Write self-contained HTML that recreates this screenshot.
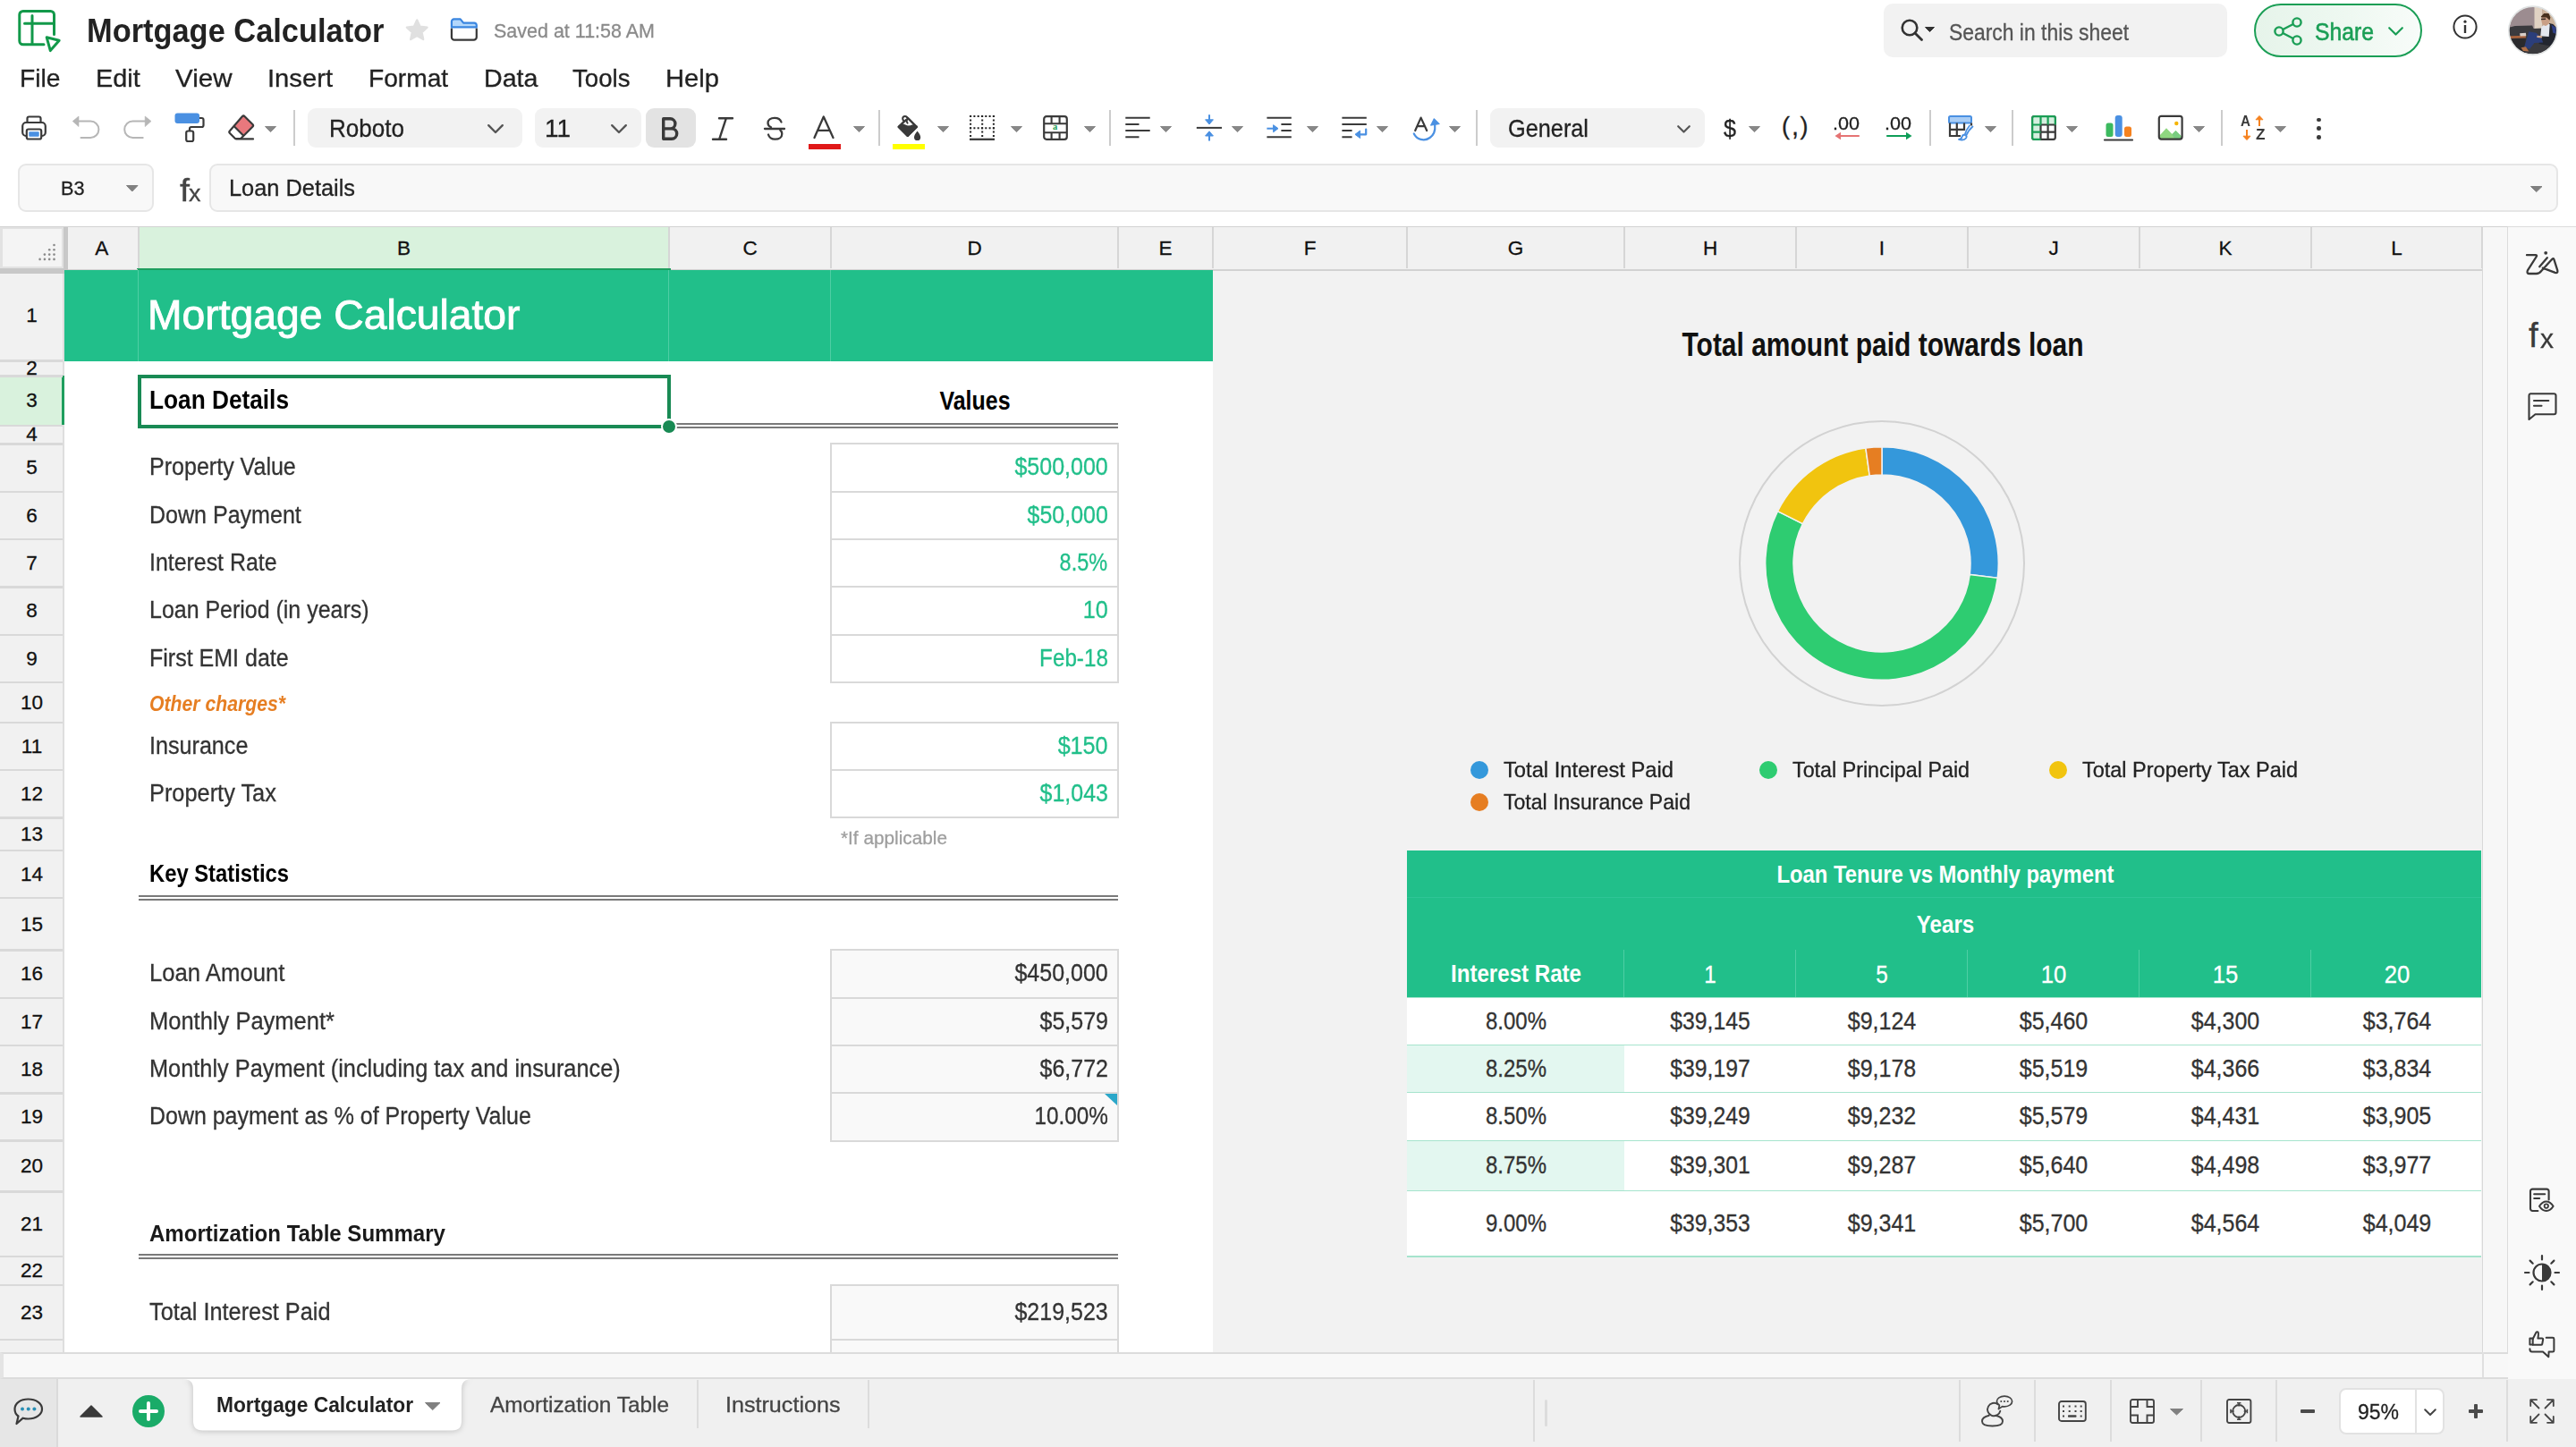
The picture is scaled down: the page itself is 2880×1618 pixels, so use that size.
<!DOCTYPE html>
<html lang="en"><head><meta charset="utf-8"><title>Mortgage Calculator</title><style>
html,body{margin:0;padding:0;background:#fff;}
body{width:2880px;height:1618px;overflow:hidden;position:relative;font-family:"Liberation Sans",sans-serif;}
#app{position:absolute;left:0;top:0;width:2880px;height:1618px;overflow:hidden;background:#fff;}
.t{position:absolute;white-space:nowrap;line-height:1;}
.r{position:absolute;box-sizing:border-box;}
svg{overflow:visible;}
</style></head><body><div id="app"><svg class="r" style="left:20px;top:10px;" width="50" height="50" viewBox="0 0 50 50">
<path d="M29 39.800H5.800a4 4 0 0 1-4-4V6.500a4 4 0 0 1 4-4H36.500a4 4 0 0 1 4 4V28.500" fill="none" stroke="#12994a" stroke-width="3" stroke-linecap="round"></path>
<path d="M7.500 16.300H40M16 7.500V39.500" fill="none" stroke="#12994a" stroke-width="3" stroke-linecap="round"></path>
<path d="M32.200 31.800L46.200 35.200L36.300 46.600Z" fill="#fff" stroke="#12994a" stroke-width="3" stroke-linejoin="round"></path>
</svg><span class="t" style="top: 17.3px; font-size: 36px; color: rgb(34, 34, 34); font-weight: 700; left: 97px; transform-origin: left center; transform: scaleX(0.9553);">Mortgage Calculator</span><svg class="r" style="left:453px;top:20px;" width="27" height="27" viewBox="0 0 27 27"><path d="M13.200 2.300l3.400 7.400 8 0.900-6 5.500 1.700 8-7.100-4.100-7.100 4.100 1.700-8-6-5.500 8-0.900z" fill="#e0e0e0" stroke="#e0e0e0" stroke-width="2.200" stroke-linejoin="round"></path></svg><svg class="r" style="left:503px;top:19px;" width="32" height="28" viewBox="0 0 32 28">
<path d="M1.900 12.500V22.400a3.200 3.200 0 0 0 3.200 3.200H26.600a3.200 3.200 0 0 0 3.200-3.200V12.500" fill="#fff" stroke="#383838" stroke-width="2.200"></path>
<path d="M1.900 11.400V5a2.600 2.600 0 0 1 2.600-2.600h7.200l3.400 4.200h12.100a2.600 2.600 0 0 1 2.600 2.600V11.400z" fill="#b3d7fb" stroke="#3a86e0" stroke-width="2.200" stroke-linejoin="round"></path>
</svg><span class="t" style="top: 23.5px; font-size: 22.5px; color: rgb(138, 138, 138); left: 552px; -webkit-text-stroke-width: 0.3px; transform-origin: left center; transform: scaleX(0.9551);">Saved at 11:58 AM</span><span class="t" style="top: 74.1px; font-size: 28px; color: rgb(34, 34, 34); left: 22px; -webkit-text-stroke-width: 0.3px; transform-origin: left center; transform: scaleX(1.0083);">File</span><span class="t" style="top: 74.1px; font-size: 28px; color: rgb(34, 34, 34); left: 107px; -webkit-text-stroke-width: 0.3px; transform-origin: left center; transform: scaleX(1.0301);">Edit</span><span class="t" style="top: 74.1px; font-size: 28px; color: rgb(34, 34, 34); left: 196px; -webkit-text-stroke-width: 0.3px; transform-origin: left center; transform: scaleX(1.055);">View</span><span class="t" style="top: 74.1px; font-size: 28px; color: rgb(34, 34, 34); left: 299px; -webkit-text-stroke-width: 0.3px; transform-origin: left center; transform: scaleX(1.0424);">Insert</span><span class="t" style="top: 74.1px; font-size: 28px; color: rgb(34, 34, 34); left: 411.8px; -webkit-text-stroke-width: 0.3px; transform-origin: left center; transform: scaleX(1.0058);">Format</span><span class="t" style="top: 74.1px; font-size: 28px; color: rgb(34, 34, 34); left: 540.6px; -webkit-text-stroke-width: 0.3px; transform-origin: left center; transform: scaleX(1.021);">Data</span><span class="t" style="top: 74.1px; font-size: 28px; color: rgb(34, 34, 34); left: 640px; -webkit-text-stroke-width: 0.3px; transform-origin: left center; transform: scaleX(0.9866);">Tools</span><span class="t" style="top: 74.1px; font-size: 28px; color: rgb(34, 34, 34); left: 744px; -webkit-text-stroke-width: 0.3px; transform-origin: left center; transform: scaleX(1.0418);">Help</span><div class="r" style="left:2106px;top:4px;width:384px;height:60px;background:#f2f2f2;border-radius:10px;"></div><svg class="r" style="left:2125px;top:21.4px;" width="26" height="26" viewBox="0 0 26 26"><circle cx="10" cy="10" r="8.3" fill="none" stroke="#333" stroke-width="2.6"></circle><path d="M16 16l7.5 7.5" stroke="#333" stroke-width="2.8" stroke-linecap="round"></path></svg><svg class="r" style="left:2151.5px;top:30.3px;" width="11" height="6" viewBox="0 0 11 6"><path d="M0.5 0.5h10l-5.0 5z" fill="#333" stroke="#333" stroke-width="1" stroke-linejoin="round"></path></svg><span class="t" style="top: 23px; font-size: 26px; color: rgb(85, 85, 85); left: 2179px; -webkit-text-stroke-width: 0.3px; transform-origin: left center; transform: scaleX(0.8802);">Search in this sheet</span><div class="r" style="left:2520px;top:4px;width:188px;height:60px;border:2.5px solid #1a9e55;border-radius:30px;background:linear-gradient(90deg,#e6f4ea 0%,#eef8f1 55%,#f8fcf9 100%);"></div><svg class="r" style="left:2542.2px;top:19px;" width="34" height="32" viewBox="0 0 34 32">
<circle cx="6" cy="16" r="4.6" fill="none" stroke="#1a9e55" stroke-width="2.4"></circle>
<circle cx="26" cy="6" r="4.6" fill="none" stroke="#1a9e55" stroke-width="2.4"></circle>
<circle cx="26" cy="26" r="4.6" fill="none" stroke="#1a9e55" stroke-width="2.4"></circle>
<path d="M10.2 14L21.8 8M10.2 18L21.8 24" stroke="#1a9e55" stroke-width="2.4"></path>
</svg><span class="t" style="top: 21.5px; font-size: 28px; color: rgb(26, 158, 85); left: 2588px; -webkit-text-stroke: 0.6px rgb(26, 158, 85); transform-origin: left center; transform: scaleX(0.8833);">Share</span><svg class="r" style="left:2669.5px;top:30.2px;" width="17" height="10" viewBox="0 0 17 10"><path d="M1.2 1.2L8.5 8.5L15.8 1.2" fill="none" stroke="#1a9e55" stroke-width="2.2" stroke-linecap="round" stroke-linejoin="round"></path></svg><svg class="r" style="left:2742px;top:16px;" width="28" height="28" viewBox="0 0 28 28"><circle cx="14" cy="14" r="12.6" fill="none" stroke="#333" stroke-width="2"></circle><circle cx="14" cy="8.2" r="1.6" fill="#333"></circle><path d="M14 12v9" stroke="#333" stroke-width="2.4"></path></svg><svg class="r" style="left:2804px;top:6px;" width="56" height="56" viewBox="0 0 56 56">
<defs><clipPath id="avc"><circle cx="27.800" cy="28.100" r="26.500"></circle></clipPath></defs>
<g clip-path="url(#avc)">
<rect width="56" height="56" fill="#9c8c90"></rect>
<polygon points="29.5,-1.2 38.2,-1.2 38.2,25.9 29.5,25.9" fill="#e0d2c3"></polygon>
<polygon points="38.2,-1.2 56.1,-1.2 56.1,27.9 38.2,27.9" fill="#cbb39c"></polygon>
<polygon points="0.5,25.0 7.8,23.0 27.1,22.5 28.6,25.9 39.2,25.4 56.1,27.9 56.1,56.9 0.5,56.9" fill="#3a3a3e"></polygon>
<polygon points="0.5,37.5 19.9,36.6 18.9,56.9 0.5,56.9" fill="#2a2a2d"></polygon>
<polygon points="2.4,34.2 19.9,33.7 19.9,36.6 2.4,37.1" fill="#a8623c"></polygon>
<polygon points="13.1,31.3 19.9,30.8 20.3,34.2 13.6,34.6" fill="#d9cfc8"></polygon>
<polygon points="46.0,20.1 50.3,21.1 54.2,25.0 53.7,42.4 46.5,45.3 34.4,42.9 37.3,36.1 45.5,34.6" fill="#22252e"></polygon>
<polygon points="48.4,21.6 53.7,25.0 53.5,31.7 50.3,30.8" fill="#2f3f86"></polygon>
<polygon points="37.3,24.0 41.6,21.1 46.7,21.1 45.7,34.9 36.3,34.2" fill="#e4e7ee"></polygon>
<polygon points="23.3,29.3 31.5,30.8 37.3,36.6 39.2,41.4 29.5,41.9 24.2,48.7 17.9,47.2 20.8,37.5" fill="#2b3e7a"></polygon>
<polygon points="32.4,33.7 38.2,34.2 37.8,36.6 32.4,36.1" fill="#d2a88c"></polygon>
<polygon points="14.5,47.2 19.9,46.2 23.3,51.6 17.0,51.1" fill="#b07048"></polygon>
<ellipse cx="41.9" cy="16.7" rx="4.600" ry="6.200" fill="#c99f86"></ellipse>
<polygon points="36.8,12.4 40.2,9.0 45.5,9.0 47.4,13.4 46.5,16.7 43.1,13.4 37.3,13.4" fill="#47311f"></polygon>
<polygon points="37.0,14.8 42.1,14.6 42.1,16.0 37.0,16.3" fill="#3a2c25"></polygon>
</g>
<circle cx="27.800" cy="28.100" r="27" fill="none" stroke="#dfe2e2" stroke-width="1.600"></circle>
</svg><svg class="r" style="left:24px;top:129px;" width="28" height="28" viewBox="0 0 28 28">
<path d="M6.5 8V3.5a2 2 0 0 1 2-2h11a2 2 0 0 1 2 2V8" fill="none" stroke="#3a3a3a" stroke-width="2.2"></path>
<rect x="1.2" y="8" width="25.6" height="15" rx="4" fill="#fff" stroke="#3a3a3a" stroke-width="2.2"></rect>
<rect x="5.8" y="15.5" width="16.4" height="11" rx="2" fill="#fff" stroke="#3a3a3a" stroke-width="2.2"></rect>
<rect x="8.3" y="18.2" width="11.4" height="5.6" rx="1" fill="#4a90e2"></rect>
</svg><svg class="r" style="left:81px;top:128px;" width="32" height="28" viewBox="0 0 32 28">
<path d="M6 7.600h14.200a9.200 9.200 0 0 1 0 18.400H9.500" fill="none" stroke="#b6b6b6" stroke-width="2" stroke-linecap="round"></path>
<path d="M7 2L0.200 7.600 7 13.600z" fill="#b6b6b6" stroke="#b6b6b6" stroke-width="0.600" stroke-linejoin="round"></path>
</svg><svg class="r" style="left:139px;top:128px;" width="32" height="28" viewBox="0 0 32 28">
<path d="M24 7.600H9.400a9.200 9.200 0 0 0 0 18.400h11.300" fill="none" stroke="#b6b6b6" stroke-width="2" stroke-linecap="round"></path>
<path d="M23.200 2l6.800 5.600-6.800 6z" fill="#b6b6b6" stroke="#b6b6b6" stroke-width="0.600" stroke-linejoin="round"></path>
</svg><svg class="r" style="left:195px;top:126px;" width="34" height="33" viewBox="0 0 34 33">
<rect x="0.5" y="0.5" width="27.5" height="11.5" rx="3" fill="#4a90e2"></rect>
<path d="M28 6h2.5a2 2 0 0 1 2 2v6a2 2 0 0 1-2 2H19a2 2 0 0 0-2 2v3" fill="none" stroke="#3a3a3a" stroke-width="2.2"></path>
<rect x="13.2" y="20.5" width="8" height="11.5" rx="2" fill="#fff" stroke="#3a3a3a" stroke-width="2.2"></rect>
</svg><svg class="r" style="left:255px;top:128px;" width="30" height="30" viewBox="0 0 30 30">
<path d="M17.2 1.6L28 12.4 17.5 23l-10.8-10.8z" fill="#e8787d"></path>
<path d="M15.8 2.2a2 2 0 0 1 2.8 0l8.8 8.8a2 2 0 0 1 0 2.8L14.2 27H8L2 21a2 2 0 0 1 0-2.8z" fill="none" stroke="#3a3a3a" stroke-width="2.2" stroke-linejoin="round"></path>
<path d="M6.5 13L17.8 24.3" stroke="#3a3a3a" stroke-width="2.2"></path>
<path d="M9 27.4h19" stroke="#3a3a3a" stroke-width="2.2" stroke-linecap="round"></path>
</svg><svg class="r" style="left:295.5px;top:141px;" width="13" height="7" viewBox="0 0 13 7"><path d="M0.5 0.5h12l-6.0 6z" fill="#888" stroke="#888" stroke-width="1" stroke-linejoin="round"></path></svg><div class="r" style="left:328px;top:123px;width:2px;height:40px;background:#ccc;"></div><div class="r" style="left:344px;top:121px;width:240px;height:44px;background:#f2f2f2;border-radius:9px;"></div><span class="t" style="top: 128.9px; font-size: 28.5px; color: rgb(34, 34, 34); left: 368px; -webkit-text-stroke-width: 0.3px; transform-origin: left center; transform: scaleX(0.914);">Roboto</span><svg class="r" style="left:545px;top:139px;" width="18" height="10.5" viewBox="0 0 18 10.5"><path d="M1.2 1.2L9.0 9.0L16.8 1.2" fill="none" stroke="#555" stroke-width="2.4" stroke-linecap="round" stroke-linejoin="round"></path></svg><div class="r" style="left:598px;top:121px;width:119px;height:44px;background:#f2f2f2;border-radius:9px;"></div><span class="t" style="top: 128.9px; font-size: 28.5px; color: rgb(34, 34, 34); left: 609px; -webkit-text-stroke-width: 0.3px; transform-origin: left center; transform: scaleX(0.9799);">11</span><svg class="r" style="left:683px;top:139px;" width="18" height="10.5" viewBox="0 0 18 10.5"><path d="M1.2 1.2L9.0 9.0L16.8 1.2" fill="none" stroke="#555" stroke-width="2.4" stroke-linecap="round" stroke-linejoin="round"></path></svg><div class="r" style="left:722px;top:121px;width:56px;height:44px;background:#e3e3e3;border-radius:9px;"></div><svg class="r" style="left:740px;top:131px;" width="20" height="26" viewBox="0 0 20 26"><path d="M1.700 1.700h7.600a5.600 5.600 0 0 1 0 11.200H1.700zM1.700 12.900h9.300a5.700 5.700 0 0 1 0 11.400H1.700z" fill="none" stroke="#3a3a3a" stroke-width="3.400" stroke-linejoin="round"></path></svg><svg class="r" style="left:796px;top:131px;" width="24" height="26" viewBox="0 0 24 26"><path d="M8 1.3h15M1 24.7h15M15.8 1.3L8.2 24.7" fill="none" stroke="#3a3a3a" stroke-width="2.4" stroke-linecap="round"></path></svg><svg class="r" style="left:854px;top:130px;" width="24" height="28" viewBox="0 0 24 28">
<path d="M19.5 6.5c-1-3-3.800-4.700-7.500-4.700-4.500 0-7.500 2.300-7.500 5.700 0 2.300 1.300 3.800 3.500 4.800M5 20.500c1 3.300 3.700 5.200 7.500 5.200 4.700 0 7.800-2.400 7.800-6 0-1.800-0.700-3.200-2-4.200" fill="none" stroke="#3a3a3a" stroke-width="2.3" stroke-linecap="round"></path>
<path d="M1 14h22" stroke="#3a3a3a" stroke-width="2.3" stroke-linecap="round"></path>
</svg><svg class="r" style="left:909px;top:129px;" width="24" height="26" viewBox="0 0 24 26"><path d="M1.5 25L11.8 1.5 22.5 25M5.2 16.800h13.600" fill="none" stroke="#3a3a3a" stroke-width="2.3" stroke-linejoin="round" stroke-linecap="round"></path></svg><div class="r" style="left:904px;top:161px;width:36px;height:6px;background:#e01818;"></div><svg class="r" style="left:953.5px;top:141px;" width="13" height="7" viewBox="0 0 13 7"><path d="M0.5 0.5h12l-6.0 6z" fill="#888" stroke="#888" stroke-width="1" stroke-linejoin="round"></path></svg><div class="r" style="left:982px;top:123px;width:2px;height:40px;background:#ccc;"></div><svg class="r" style="left:1003px;top:128px;" width="28" height="30" viewBox="0 0 28 30">
<path d="M11.800 3.800L21.800 13.800 11.800 23.800 1.800 13.800z" fill="#fff" stroke="#3a3a3a" stroke-width="2.400" stroke-linejoin="round"></path>
<path d="M1.800 13.800c2.300-2.400 4.600-2.400 7-1.200s4.800 1.400 7 0.400 4.200-0.600 6 0.800L11.800 23.800z" fill="#3a3a3a" stroke="#3a3a3a" stroke-width="2.400" stroke-linejoin="round"></path>
<circle cx="8.800" cy="4.600" r="2.600" fill="#fff" stroke="#3a3a3a" stroke-width="2"></circle>
<path d="M9.800 6l1.800 3.600" stroke="#3a3a3a" stroke-width="2" stroke-linecap="round"></path>
<path d="M22.600 18.600c2.200 3 3.600 5 3.600 6.800a3.600 3.600 0 0 1-7.200 0c0-1.800 1.400-3.800 3.600-6.800z" fill="#3a3a3a"></path>
</svg><div class="r" style="left:998px;top:161px;width:36px;height:6px;background:#ffff00;"></div><svg class="r" style="left:1047.5px;top:141px;" width="13" height="7" viewBox="0 0 13 7"><path d="M0.5 0.5h12l-6.0 6z" fill="#888" stroke="#888" stroke-width="1" stroke-linejoin="round"></path></svg><svg class="r" style="left:1084px;top:129px;" width="28" height="28" viewBox="0 0 28 28">
<path d="M0.100 1.100h28M0.100 14.200h28" stroke="#222" stroke-width="2" stroke-dasharray="2 2.300" fill="none"></path>
<path d="M1.100 0.100v25M14.200 0.100v25M26.900 0.100v25" stroke="#222" stroke-width="2" stroke-dasharray="2 2.370" fill="none"></path>
<path d="M0 26.800h28" stroke="#3a3a3a" stroke-width="2.300"></path>
</svg><svg class="r" style="left:1129.5px;top:141px;" width="13" height="7" viewBox="0 0 13 7"><path d="M0.5 0.5h12l-6.0 6z" fill="#888" stroke="#888" stroke-width="1" stroke-linejoin="round"></path></svg><svg class="r" style="left:1166px;top:129px;" width="28" height="28" viewBox="0 0 28 28">
<rect x="1.200" y="1.200" width="25.600" height="25.600" rx="2.800" fill="none" stroke="#3a3a3a" stroke-width="2.200"></rect>
<path d="M1.200 9.200h25.600M1.200 19.200h25.600M9.600 1.200V9M18.600 1.200V9M9.600 19v7.800M18.600 19v7.800" stroke="#3a3a3a" stroke-width="2.100" fill="none"></path>
</svg><span class="t" style="top:136.7px;font-size:10.5px;color:#1a9e55;font-weight:700;left:1177.0px;font-family:'Liberation Serif',serif;">a</span><svg class="r" style="left:1211.5px;top:141px;" width="13" height="7" viewBox="0 0 13 7"><path d="M0.5 0.5h12l-6.0 6z" fill="#888" stroke="#888" stroke-width="1" stroke-linejoin="round"></path></svg><div class="r" style="left:1240px;top:123px;width:2px;height:40px;background:#ccc;"></div><svg class="r" style="left:1258px;top:129px;" width="28" height="28" viewBox="0 0 28 28"><path d="M0.300 2.800h27.400M0.300 10h15.200M0.300 17.100h27.400M0.300 24.200h15.200" stroke="#3a3a3a" stroke-width="2"></path></svg><svg class="r" style="left:1297px;top:141px;" width="13" height="7" viewBox="0 0 13 7"><path d="M0.5 0.5h12l-6.0 6z" fill="#888" stroke="#888" stroke-width="1" stroke-linejoin="round"></path></svg><svg class="r" style="left:1337px;top:127px;" width="30" height="32" viewBox="0 0 30 32">
<path d="M0.800 15.900h28.200" stroke="#3a3a3a" stroke-width="2"></path>
<path d="M15 1.200v7M15 30.600v-7" stroke="#4a90e2" stroke-width="2"></path>
<path d="M10.600 6.800h8.800L15 12z M10.600 25h8.800L15 19.800z" fill="#4a90e2" stroke="#4a90e2" stroke-width="1" stroke-linejoin="round"></path>
</svg><svg class="r" style="left:1377px;top:141px;" width="13" height="7" viewBox="0 0 13 7"><path d="M0.5 0.5h12l-6.0 6z" fill="#888" stroke="#888" stroke-width="1" stroke-linejoin="round"></path></svg><svg class="r" style="left:1416px;top:129px;" width="28" height="28" viewBox="0 0 28 28">
<path d="M0.400 2.800h27.400M16.400 10h11.400M16.400 17.100h11.400M0.400 24.200h27.400" stroke="#3a3a3a" stroke-width="2"></path>
<path d="M0.400 14.700h8" stroke="#4a90e2" stroke-width="2"></path>
<path d="M7.600 10.700l5.400 4-5.400 4z" fill="#4a90e2" stroke="#4a90e2" stroke-width="1" stroke-linejoin="round"></path>
</svg><svg class="r" style="left:1461px;top:141px;" width="13" height="7" viewBox="0 0 13 7"><path d="M0.5 0.5h12l-6.0 6z" fill="#888" stroke="#888" stroke-width="1" stroke-linejoin="round"></path></svg><svg class="r" style="left:1500px;top:129px;" width="29" height="28" viewBox="0 0 29 28">
<path d="M0.400 2.800h27.400M0.400 10h27.400M0.400 17.100h11.200M0.400 24.200h11.200" stroke="#3a3a3a" stroke-width="2"></path>
<path d="M27.200 15.500v5.800h-7.500" fill="none" stroke="#4a90e2" stroke-width="2.200" stroke-linecap="round" stroke-linejoin="round"></path>
<path d="M20.600 17.100l-5.600 4.200 5.600 4.200z" fill="#4a90e2" stroke="#4a90e2" stroke-width="1" stroke-linejoin="round"></path>
</svg><svg class="r" style="left:1539px;top:141px;" width="13" height="7" viewBox="0 0 13 7"><path d="M0.5 0.5h12l-6.0 6z" fill="#888" stroke="#888" stroke-width="1" stroke-linejoin="round"></path></svg><svg class="r" style="left:1578px;top:128px;" width="34" height="32" viewBox="0 0 34 32">
<path d="M4.200 18L10.600 3.600 17.200 18M6.400 13.200h8.600" fill="none" stroke="#3a3a3a" stroke-width="2.200" stroke-linejoin="round" stroke-linecap="round"></path>
<path d="M2.800 21.500c3 6.500 11.500 9 17.800 4.500 4.500-3.200 6.200-8.500 5.600-14" fill="none" stroke="#4a90e2" stroke-width="2.200" stroke-linecap="round"></path>
<path d="M21.500 12.200l3.800-7.600 6 6z" fill="#4a90e2" stroke="#4a90e2" stroke-width="1" stroke-linejoin="round"></path>
</svg><svg class="r" style="left:1619.5px;top:141px;" width="13" height="7" viewBox="0 0 13 7"><path d="M0.5 0.5h12l-6.0 6z" fill="#888" stroke="#888" stroke-width="1" stroke-linejoin="round"></path></svg><div class="r" style="left:1650px;top:123px;width:2px;height:40px;background:#ccc;"></div><div class="r" style="left:1666px;top:121px;width:240px;height:44px;background:#f2f2f2;border-radius:9px;"></div><span class="t" style="top: 128.9px; font-size: 28.5px; color: rgb(34, 34, 34); left: 1686px; -webkit-text-stroke-width: 0.3px; transform-origin: left center; transform: scaleX(0.8875);">General</span><svg class="r" style="left:1875px;top:140px;" width="15" height="9" viewBox="0 0 15 9"><path d="M1.2 1.2L7.5 7.5L13.8 1.2" fill="none" stroke="#555" stroke-width="2.2" stroke-linecap="round" stroke-linejoin="round"></path></svg><span class="t" style="top: 129.7px; font-size: 27.5px; color: rgb(34, 34, 34); left: 1927px; -webkit-text-stroke: 0.3px rgb(34, 34, 34); transform-origin: left center; transform: scaleX(0.9152);">$</span><svg class="r" style="left:1955px;top:141px;" width="13" height="7" viewBox="0 0 13 7"><path d="M0.5 0.5h12l-6.0 6z" fill="#888" stroke="#888" stroke-width="1" stroke-linejoin="round"></path></svg><span class="t" style="top:127.6px;font-size:27px;color:#222;left:1992.0px;-webkit-text-stroke-width:0.3px;">(</span><span class="t" style="top:126.5px;font-size:29px;color:#222;left:2003.0px;-webkit-text-stroke-width:0.3px;">,</span><span class="t" style="top:127.6px;font-size:27px;color:#222;left:2012.5px;-webkit-text-stroke-width:0.3px;">)</span><span class="t" style="top: 126.7px; font-size: 21px; color: rgb(34, 34, 34); left: 2049px; -webkit-text-stroke-width: 0.3px; transform-origin: left center; transform: scaleX(1.0273);">.00</span><svg class="r" style="left:2051px;top:146px;" width="28" height="12" viewBox="0 0 28 12"><path d="M3 6h24" stroke="#e57373" stroke-width="2.200" stroke-linecap="round"></path><path d="M0.500 6l6.500-4.200v8.400z" fill="#e57373"></path></svg><span class="t" style="top: 126.7px; font-size: 21px; color: rgb(34, 34, 34); left: 2107px; -webkit-text-stroke-width: 0.3px; transform-origin: left center; transform: scaleX(1.0273);">.00</span><svg class="r" style="left:2109px;top:146px;" width="29" height="12" viewBox="0 0 29 12"><path d="M1 6h24" stroke="#0f9d58" stroke-width="2.200" stroke-linecap="round"></path><path d="M28.500 6l-6.500-4.200v8.400z" fill="#0f9d58"></path></svg><div class="r" style="left:2157px;top:123px;width:2px;height:40px;background:#ccc;"></div><svg class="r" style="left:2178px;top:129px;" width="30" height="30" viewBox="0 0 30 30">
<rect x="1" y="1" width="25" height="7.500" rx="1.500" fill="#a9cdf5" stroke="#4a90e2" stroke-width="2"></rect>
<path d="M2 8.500v14.500h12M2 15.800h17M9.800 8.500v14.500M18 8.500v8.500M26 8.500v3" fill="none" stroke="#3a3a3a" stroke-width="2.200"></path>
<path d="M27.500 12.500c-3 2.500-6 7-7.500 10.500M24 11.500c-2.500 3-4.500 7-5.500 10.500M19 21.500c-1 0-3 0.500-3.500 2.500-0.400 1.800-2 2.800-3.500 3 3 0.800 6.500 0.600 8-1.500 1-1.300 1.200-2.800-1-4z" fill="none" stroke="#4a90e2" stroke-width="1.800" stroke-linejoin="round" stroke-linecap="round"></path>
</svg><svg class="r" style="left:2218.5px;top:141px;" width="13" height="7" viewBox="0 0 13 7"><path d="M0.5 0.5h12l-6.0 6z" fill="#888" stroke="#888" stroke-width="1" stroke-linejoin="round"></path></svg><div class="r" style="left:2249px;top:123px;width:2px;height:40px;background:#ccc;"></div><svg class="r" style="left:2271px;top:129px;" width="28" height="28" viewBox="0 0 28 28">
<rect x="1.200" y="1.200" width="25.600" height="25.600" rx="2" fill="#fff" stroke="#3a3a3a" stroke-width="2.200"></rect>
<path d="M1.200 1.200h25.600v9.300H10.500v16.300H1.200z" fill="#d5efdf"></path>
<path d="M10.500 10.500h16.300M10.500 18.600h16.300M18.600 10.500v16.300M10.500 10.500v16.300" stroke="#3a3a3a" stroke-width="2.200" fill="none"></path>
<path d="M26.800 10.500V3.200a2 2 0 0 0-2-2H3.200a2 2 0 0 0-2 2v21.600a2 2 0 0 0 2 2h7.300M1.200 10.500h9.300M1.200 18.600h9.300M10.500 1.200v9.300M18.600 1.200v9.300" fill="none" stroke="#1a9e55" stroke-width="2.200"></path>
</svg><svg class="r" style="left:2310px;top:141px;" width="13" height="7" viewBox="0 0 13 7"><path d="M0.5 0.5h12l-6.0 6z" fill="#888" stroke="#888" stroke-width="1" stroke-linejoin="round"></path></svg><svg class="r" style="left:2352px;top:128px;" width="33" height="30" viewBox="0 0 33 30">
<rect x="2.500" y="9.500" width="8" height="15.500" rx="2.500" fill="#3cba5f"></rect>
<rect x="12.700" y="1" width="8" height="24" rx="3" fill="#4a90e2"></rect>
<rect x="23" y="13.500" width="8" height="11.500" rx="2.500" fill="#f5821f"></rect>
<path d="M1 28.500h31" stroke="#3a3a3a" stroke-width="2.200" stroke-linecap="round"></path>
</svg><svg class="r" style="left:2412px;top:128px;" width="30" height="30" viewBox="0 0 30 30">
<path d="M2.500 23.500L10 15.200 16.500 22 20.500 18l6.500 6.500v2.500H2.500z" fill="#8fd680"></path>
<path d="M16.500 22L20.500 18l6.500 6.500v2.500H19z" fill="#79cc80"></path>
<circle cx="21.300" cy="10" r="2.200" fill="#f5b400"></circle>
<rect x="1.800" y="1.800" width="25.800" height="25.800" rx="2.500" fill="none" stroke="#3a3a3a" stroke-width="2.200"></rect>
</svg><svg class="r" style="left:2452px;top:141px;" width="13" height="7" viewBox="0 0 13 7"><path d="M0.5 0.5h12l-6.0 6z" fill="#888" stroke="#888" stroke-width="1" stroke-linejoin="round"></path></svg><div class="r" style="left:2483px;top:123px;width:2px;height:40px;background:#ccc;"></div><span class="t" style="top: 126.8px; font-size: 16.5px; color: rgb(58, 58, 58); left: 2505px; font-weight: 700; transform-origin: left center; transform: scaleX(0.9227);">A</span><span class="t" style="top: 143.1px; font-size: 16px; color: rgb(58, 58, 58); font-weight: 700; left: 2521.5px; transform-origin: left center; transform: scaleX(1.0735);">Z</span><svg class="r" style="left:2520px;top:128px;" width="12" height="14" viewBox="0 0 12 14"><path d="M6 13V4" fill="none" stroke="#f5821f" stroke-width="2"></path><path d="M2 5.800h8L6 1.500z" fill="#f5821f" stroke="#f5821f" stroke-width="1" stroke-linejoin="round"></path></svg><svg class="r" style="left:2506px;top:144px;" width="12" height="14" viewBox="0 0 12 14"><path d="M6 1v9" fill="none" stroke="#f5821f" stroke-width="2"></path><path d="M2 8.200h8L6 12.500z" fill="#f5821f" stroke="#f5821f" stroke-width="1" stroke-linejoin="round"></path></svg><svg class="r" style="left:2542.5px;top:141px;" width="13" height="7" viewBox="0 0 13 7"><path d="M0.5 0.5h12l-6.0 6z" fill="#888" stroke="#888" stroke-width="1" stroke-linejoin="round"></path></svg><div class="r" style="left:2590.4px;top:131.8px;width:4.6px;height:4.6px;background:#3a3a3a;border-radius:50%;"></div><div class="r" style="left:2590.4px;top:141.4px;width:4.6px;height:4.6px;background:#3a3a3a;border-radius:50%;"></div><div class="r" style="left:2590.4px;top:151.0px;width:4.6px;height:4.6px;background:#3a3a3a;border-radius:50%;"></div><div class="r" style="left:20px;top:183px;width:152px;height:53.6px;background:#f8f8f8;border:2px solid #e6e6e6;border-radius:9px;"></div><span class="t" style="top: 201.1px; font-size: 21.5px; color: rgb(34, 34, 34); left: 67.5px; -webkit-text-stroke-width: 0.3px; transform-origin: left center; transform: scaleX(1.0071);">B3</span><svg class="r" style="left:141px;top:207px;" width="13.5" height="7.5" viewBox="0 0 13.5 7.5"><path d="M0.5 0.5h12.5l-6.25 6.5z" fill="#808080" stroke="#808080" stroke-width="1" stroke-linejoin="round"></path></svg><span class="t" style="top: 194.7px; font-size: 35px; color: rgb(68, 68, 68); left: 200.8px; -webkit-text-stroke-width: 0.3px; transform-origin: left center; transform: scaleX(1.13);">f</span><span class="t" style="top: 202.9px; font-size: 26.5px; color: rgb(68, 68, 68); left: 211.3px; -webkit-text-stroke-width: 0.3px; transform-origin: left center; transform: scaleX(1.0189);">x</span><div class="r" style="left:234px;top:183px;width:2626px;height:53.6px;background:#f8f8f8;border:2px solid #e6e6e6;border-radius:9px;"></div><span class="t" style="top: 196.8px; font-size: 26px; color: rgb(34, 34, 34); left: 256px; -webkit-text-stroke-width: 0.3px; transform-origin: left center; transform: scaleX(0.9755);">Loan Details</span><svg class="r" style="left:2829px;top:207.5px;" width="13.5" height="7" viewBox="0 0 13.5 7"><path d="M0.5 0.5h12.5l-6.25 6z" fill="#808080" stroke="#808080" stroke-width="1" stroke-linejoin="round"></path></svg><div class="r" style="left:72px;top:302px;width:1284px;height:1211px;background:#fff;"></div><div class="r" style="left:1356px;top:302px;width:1419px;height:1211px;background:#f2f2f2;"></div><div class="r" style="left:0px;top:252.5px;width:2775px;height:49.5px;background:#f1f1f1;border-top:1.500px solid #d2d2d2;"></div><div class="r" style="left:155px;top:254px;width:593px;height:47px;background:#d9f2dd;"></div><div class="r" style="left:153px;top:300px;width:597px;height:3px;background:#1f9e5e;"></div><div class="r" style="left:154px;top:254px;width:2px;height:46px;background:#d6d6d6;"></div><div class="r" style="left:747px;top:254px;width:2px;height:46px;background:#d6d6d6;"></div><div class="r" style="left:928px;top:254px;width:2px;height:46px;background:#d6d6d6;"></div><div class="r" style="left:1249px;top:254px;width:2px;height:46px;background:#d6d6d6;"></div><div class="r" style="left:1355px;top:254px;width:2px;height:46px;background:#d6d6d6;"></div><div class="r" style="left:1572px;top:254px;width:2px;height:46px;background:#d6d6d6;"></div><div class="r" style="left:1815px;top:254px;width:2px;height:46px;background:#d6d6d6;"></div><div class="r" style="left:2007px;top:254px;width:2px;height:46px;background:#d6d6d6;"></div><div class="r" style="left:2199px;top:254px;width:2px;height:46px;background:#d6d6d6;"></div><div class="r" style="left:2391px;top:254px;width:2px;height:46px;background:#d6d6d6;"></div><div class="r" style="left:2583px;top:254px;width:2px;height:46px;background:#d6d6d6;"></div><div class="r" style="left:2774px;top:254px;width:2px;height:46px;background:#d6d6d6;"></div><div class="r" style="left:76px;top:301px;width:78px;height:1.6px;background:#d2d2d2;"></div><div class="r" style="left:750px;top:301px;width:2025px;height:1.6px;background:#d2d2d2;"></div><div class="r" style="left:0px;top:254px;width:71px;height:46px;background:#f4f4f4;border:2px solid #e2e2e2;border-left:3px solid #e2e2e2;"></div><div class="r" style="left:71px;top:254px;width:5px;height:52px;background:#c8c8c8;"></div><div class="r" style="left:0px;top:300px;width:72px;height:6px;background:#c8c8c8;"></div><svg class="r" style="left:41px;top:271px;" width="22" height="22" viewBox="0 0 22 22"><circle cx="19.5" cy="3.0" r="1.300" fill="#8a8a8a"></circle><circle cx="19.5" cy="8.3" r="1.300" fill="#8a8a8a"></circle><circle cx="14.2" cy="8.3" r="1.300" fill="#8a8a8a"></circle><circle cx="19.5" cy="13.6" r="1.300" fill="#8a8a8a"></circle><circle cx="14.2" cy="13.6" r="1.300" fill="#8a8a8a"></circle><circle cx="8.9" cy="13.6" r="1.300" fill="#8a8a8a"></circle><circle cx="19.5" cy="18.9" r="1.300" fill="#8a8a8a"></circle><circle cx="14.2" cy="18.9" r="1.300" fill="#8a8a8a"></circle><circle cx="8.9" cy="18.9" r="1.300" fill="#8a8a8a"></circle><circle cx="3.6" cy="18.9" r="1.300" fill="#8a8a8a"></circle></svg><span class="t" style="top:266.5px;font-size:22.5px;color:#111;left:113.7px;transform:translateX(-50%);-webkit-text-stroke-width:0.3px;">A</span><span class="t" style="top:266.5px;font-size:22.5px;color:#111;left:451.5px;transform:translateX(-50%);-webkit-text-stroke-width:0.3px;">B</span><span class="t" style="top:266.5px;font-size:22.5px;color:#111;left:838.5px;transform:translateX(-50%);-webkit-text-stroke-width:0.3px;">C</span><span class="t" style="top:266.5px;font-size:22.5px;color:#111;left:1089.5px;transform:translateX(-50%);-webkit-text-stroke-width:0.3px;">D</span><span class="t" style="top:266.5px;font-size:22.5px;color:#111;left:1303.0px;transform:translateX(-50%);-webkit-text-stroke-width:0.3px;">E</span><span class="t" style="top:266.5px;font-size:22.5px;color:#111;left:1464.5px;transform:translateX(-50%);-webkit-text-stroke-width:0.3px;">F</span><span class="t" style="top:266.5px;font-size:22.5px;color:#111;left:1694.5px;transform:translateX(-50%);-webkit-text-stroke-width:0.3px;">G</span><span class="t" style="top:266.5px;font-size:22.5px;color:#111;left:1912.0px;transform:translateX(-50%);-webkit-text-stroke-width:0.3px;">H</span><span class="t" style="top:266.5px;font-size:22.5px;color:#111;left:2104.0px;transform:translateX(-50%);-webkit-text-stroke-width:0.3px;">I</span><span class="t" style="top:266.5px;font-size:22.5px;color:#111;left:2296.0px;transform:translateX(-50%);-webkit-text-stroke-width:0.3px;">J</span><span class="t" style="top:266.5px;font-size:22.5px;color:#111;left:2488.0px;transform:translateX(-50%);-webkit-text-stroke-width:0.3px;">K</span><span class="t" style="top:266.5px;font-size:22.5px;color:#111;left:2679.5px;transform:translateX(-50%);-webkit-text-stroke-width:0.3px;">L</span><div class="r" style="left:0px;top:306px;width:72px;height:1207px;background:#f1f1f1;"></div><div class="r" style="left:70px;top:306px;width:2px;height:1207px;background:#dedede;"></div><div class="r" style="left:0px;top:421px;width:70px;height:54px;background:#d9f2dd;"></div><div class="r" style="left:69px;top:420px;width:3px;height:55px;background:#1f9e5e;"></div><div class="r" style="left:0px;top:402.3px;width:70px;height:2.4px;background:#d9d9d9;"></div><span class="t" style="top:342.0px;font-size:22.5px;color:#111;left:35.5px;transform:translateX(-50%);-webkit-text-stroke-width:0.3px;">1</span><div class="r" style="left:0px;top:419.3px;width:70px;height:2.4px;background:#d9d9d9;"></div><span class="t" style="top:400.5px;font-size:22.5px;color:#111;left:35.5px;transform:translateX(-50%);-webkit-text-stroke-width:0.3px;">2</span><div class="r" style="left:0px;top:474.6px;width:70px;height:2.4px;background:#d9d9d9;"></div><span class="t" style="top:437.4px;font-size:22.5px;color:#111;left:35.5px;transform:translateX(-50%);-webkit-text-stroke-width:0.3px;">3</span><div class="r" style="left:0px;top:495.3px;width:70px;height:2.4px;background:#d9d9d9;"></div><span class="t" style="top:475.0px;font-size:22.5px;color:#111;left:35.5px;transform:translateX(-50%);-webkit-text-stroke-width:0.3px;">4</span><div class="r" style="left:0px;top:548.5px;width:70px;height:2.4px;background:#d9d9d9;"></div><span class="t" style="top:512.4px;font-size:22.5px;color:#111;left:35.5px;transform:translateX(-50%);-webkit-text-stroke-width:0.3px;">5</span><div class="r" style="left:0px;top:601.6999999999999px;width:70px;height:2.4px;background:#d9d9d9;"></div><span class="t" style="top:565.6px;font-size:22.5px;color:#111;left:35.5px;transform:translateX(-50%);-webkit-text-stroke-width:0.3px;">6</span><div class="r" style="left:0px;top:655.3px;width:70px;height:2.4px;background:#d9d9d9;"></div><span class="t" style="top:619.0px;font-size:22.5px;color:#111;left:35.5px;transform:translateX(-50%);-webkit-text-stroke-width:0.3px;">7</span><div class="r" style="left:0px;top:708.5px;width:70px;height:2.4px;background:#d9d9d9;"></div><span class="t" style="top:672.4px;font-size:22.5px;color:#111;left:35.5px;transform:translateX(-50%);-webkit-text-stroke-width:0.3px;">8</span><div class="r" style="left:0px;top:761.8px;width:70px;height:2.4px;background:#d9d9d9;"></div><span class="t" style="top:725.6px;font-size:22.5px;color:#111;left:35.5px;transform:translateX(-50%);-webkit-text-stroke-width:0.3px;">9</span><div class="r" style="left:0px;top:807.0px;width:70px;height:2.4px;background:#d9d9d9;"></div><span class="t" style="top:774.9px;font-size:22.5px;color:#111;left:35.5px;transform:translateX(-50%);-webkit-text-stroke-width:0.3px;">10</span><div class="r" style="left:0px;top:860.0999999999999px;width:70px;height:2.4px;background:#d9d9d9;"></div><span class="t" style="top:824.0px;font-size:22.5px;color:#111;left:35.5px;transform:translateX(-50%);-webkit-text-stroke-width:0.3px;">11</span><div class="r" style="left:0px;top:913.1999999999999px;width:70px;height:2.4px;background:#d9d9d9;"></div><span class="t" style="top:877.1px;font-size:22.5px;color:#111;left:35.5px;transform:translateX(-50%);-webkit-text-stroke-width:0.3px;">12</span><div class="r" style="left:0px;top:949.8px;width:70px;height:2.4px;background:#d9d9d9;"></div><span class="t" style="top:922.0px;font-size:22.5px;color:#111;left:35.5px;transform:translateX(-50%);-webkit-text-stroke-width:0.3px;">13</span><div class="r" style="left:0px;top:1002.9px;width:70px;height:2.4px;background:#d9d9d9;"></div><span class="t" style="top:966.8px;font-size:22.5px;color:#111;left:35.5px;transform:translateX(-50%);-webkit-text-stroke-width:0.3px;">14</span><div class="r" style="left:0px;top:1061.3px;width:70px;height:2.4px;background:#d9d9d9;"></div><span class="t" style="top:1022.6px;font-size:22.5px;color:#111;left:35.5px;transform:translateX(-50%);-webkit-text-stroke-width:0.3px;">15</span><div class="r" style="left:0px;top:1114.6px;width:70px;height:2.4px;background:#d9d9d9;"></div><span class="t" style="top:1078.4px;font-size:22.5px;color:#111;left:35.5px;transform:translateX(-50%);-webkit-text-stroke-width:0.3px;">16</span><div class="r" style="left:0px;top:1167.8999999999999px;width:70px;height:2.4px;background:#d9d9d9;"></div><span class="t" style="top:1131.7px;font-size:22.5px;color:#111;left:35.5px;transform:translateX(-50%);-webkit-text-stroke-width:0.3px;">17</span><div class="r" style="left:0px;top:1221.2px;width:70px;height:2.4px;background:#d9d9d9;"></div><span class="t" style="top:1185.0px;font-size:22.5px;color:#111;left:35.5px;transform:translateX(-50%);-webkit-text-stroke-width:0.3px;">18</span><div class="r" style="left:0px;top:1274.3999999999999px;width:70px;height:2.4px;background:#d9d9d9;"></div><span class="t" style="top:1238.3px;font-size:22.5px;color:#111;left:35.5px;transform:translateX(-50%);-webkit-text-stroke-width:0.3px;">19</span><div class="r" style="left:0px;top:1331.3px;width:70px;height:2.4px;background:#d9d9d9;"></div><span class="t" style="top:1293.3px;font-size:22.5px;color:#111;left:35.5px;transform:translateX(-50%);-webkit-text-stroke-width:0.3px;">20</span><div class="r" style="left:0px;top:1403.8px;width:70px;height:2.4px;background:#d9d9d9;"></div><span class="t" style="top:1358.0px;font-size:22.5px;color:#111;left:35.5px;transform:translateX(-50%);-webkit-text-stroke-width:0.3px;">21</span><div class="r" style="left:0px;top:1435.8999999999999px;width:70px;height:2.4px;background:#d9d9d9;"></div><span class="t" style="top:1410.3px;font-size:22.5px;color:#111;left:35.5px;transform:translateX(-50%);-webkit-text-stroke-width:0.3px;">22</span><div class="r" style="left:0px;top:1496.6px;width:70px;height:2.4px;background:#d9d9d9;"></div><span class="t" style="top:1456.7px;font-size:22.5px;color:#111;left:35.5px;transform:translateX(-50%);-webkit-text-stroke-width:0.3px;">23</span><div class="r" style="left:72px;top:302px;width:1284px;height:102px;background:#21bf8a;"></div><div class="r" style="left:154px;top:302px;width:1px;height:102px;background:#4fcea4;"></div><div class="r" style="left:747px;top:302px;width:1px;height:102px;background:#4fcea4;"></div><div class="r" style="left:928px;top:302px;width:1px;height:102px;background:#4fcea4;"></div><span class="t" style="top: 329.4px; font-size: 46.8px; color: rgb(255, 255, 255); left: 165.4px; -webkit-text-stroke: 0.9px rgb(255, 255, 255); transform-origin: left center; transform: scaleX(0.9884);">Mortgage Calculator</span><span class="t" style="top: 433.3px; font-size: 28.7px; color: rgb(0, 0, 0); font-weight: 700; left: 166.5px; transform-origin: left center; transform: scaleX(0.9145);">Loan Details</span><span class="t" style="top: 434px; font-size: 28.7px; color: rgb(0, 0, 0); font-weight: 700; left: 1089.5px; transform: translateX(-50%) scaleX(0.8689);">Values</span><div class="r" style="left:748px;top:473px;width:502px;height:2px;background:#7a7a7a;"></div><div class="r" style="left:748px;top:477px;width:502px;height:2px;background:#7a7a7a;"></div><div class="r" style="left:154px;top:419px;width:596px;height:60px;border:4px solid #198a54;"></div><div class="r" style="left:739px;top:468px;width:18px;height:18px;background:#198a54;border-radius:50%;border:2px solid #fff;"></div><span class="t" style="top: 509.3px; font-size: 26.8px; color: rgb(51, 51, 51); left: 166.8px; -webkit-text-stroke-width: 0.3px; transform-origin: left center; transform: scaleX(0.9346);">Property Value</span><span class="t" style="top: 562.5px; font-size: 26.8px; color: rgb(51, 51, 51); left: 166.8px; -webkit-text-stroke-width: 0.3px; transform-origin: left center; transform: scaleX(0.9344);">Down Payment</span><span class="t" style="top: 615.9px; font-size: 26.8px; color: rgb(51, 51, 51); left: 166.8px; -webkit-text-stroke-width: 0.3px; transform-origin: left center; transform: scaleX(0.9288);">Interest Rate</span><span class="t" style="top: 669.3px; font-size: 26.8px; color: rgb(51, 51, 51); left: 166.8px; -webkit-text-stroke-width: 0.3px; transform-origin: left center; transform: scaleX(0.9312);">Loan Period (in years)</span><span class="t" style="top: 722.6px; font-size: 26.8px; color: rgb(51, 51, 51); left: 166.8px; -webkit-text-stroke-width: 0.3px; transform-origin: left center; transform: scaleX(0.9336);">First EMI date</span><span class="t" style="top: 821px; font-size: 26.8px; color: rgb(51, 51, 51); left: 166.8px; -webkit-text-stroke-width: 0.3px; transform-origin: left center; transform: scaleX(0.9381);">Insurance</span><span class="t" style="top: 874.1px; font-size: 26.8px; color: rgb(51, 51, 51); left: 166.8px; -webkit-text-stroke-width: 0.3px; transform-origin: left center; transform: scaleX(0.9464);">Property Tax</span><span class="t" style="top: 1075.4px; font-size: 26.8px; color: rgb(51, 51, 51); left: 166.8px; -webkit-text-stroke-width: 0.3px; transform-origin: left center; transform: scaleX(0.9586);">Loan Amount</span><span class="t" style="top: 1128.7px; font-size: 26.8px; color: rgb(51, 51, 51); left: 166.8px; -webkit-text-stroke-width: 0.3px; transform-origin: left center; transform: scaleX(0.9519);">Monthly Payment*</span><span class="t" style="top: 1182px; font-size: 26.8px; color: rgb(51, 51, 51); left: 166.8px; -webkit-text-stroke-width: 0.3px; transform-origin: left center; transform: scaleX(0.9455);">Monthly Payment (including tax and insurance)</span><span class="t" style="top: 1235.2px; font-size: 26.8px; color: rgb(51, 51, 51); left: 166.8px; -webkit-text-stroke-width: 0.3px; transform-origin: left center; transform: scaleX(0.9313);">Down payment as % of Property Value</span><span class="t" style="top: 1453.7px; font-size: 26.8px; color: rgb(51, 51, 51); left: 166.8px; -webkit-text-stroke-width: 0.3px; transform-origin: left center; transform: scaleX(0.9441);">Total Interest Paid</span><span class="t" style="top: 775.3px; font-size: 24px; color: rgb(230, 126, 34); font-weight: 700; font-style: italic; left: 166.5px; transform-origin: left center; transform: scaleX(0.8833);">Other charges*</span><span class="t" style="top: 927px; font-size: 20.8px; color: rgb(158, 158, 158); left: 939.5px; -webkit-text-stroke-width: 0.3px; transform-origin: left center; transform: scaleX(0.9992);">*If applicable</span><span class="t" style="top: 963.5px; font-size: 26.8px; color: rgb(0, 0, 0); font-weight: 700; left: 166.5px; transform-origin: left center; transform: scaleX(0.8876);">Key Statistics</span><span class="t" style="top: 1366.2px; font-size: 26.3px; color: rgb(26, 26, 26); font-weight: 700; left: 166.8px; transform-origin: left center; transform: scaleX(0.9146);">Amortization Table Summary</span><div class="r" style="left:155px;top:1001px;width:1095px;height:2px;background:#7a7a7a;"></div><div class="r" style="left:155px;top:1005px;width:1095px;height:2px;background:#7a7a7a;"></div><div class="r" style="left:155px;top:1402px;width:1095px;height:2px;background:#7a7a7a;"></div><div class="r" style="left:155px;top:1406px;width:1095px;height:2px;background:#7a7a7a;"></div><div class="r" style="left:928px;top:495px;width:323px;height:269px;background:#fff;border:2px solid #d9d9d9;"></div><div class="r" style="left:928px;top:549px;width:323px;height:2px;background:#d9d9d9;"></div><div class="r" style="left:928px;top:602px;width:323px;height:2px;background:#d9d9d9;"></div><div class="r" style="left:928px;top:655px;width:323px;height:2px;background:#d9d9d9;"></div><div class="r" style="left:928px;top:709px;width:323px;height:2px;background:#d9d9d9;"></div><div class="r" style="left:928px;top:807px;width:323px;height:108px;background:#fff;border:2px solid #d9d9d9;"></div><div class="r" style="left:928px;top:860px;width:323px;height:2px;background:#d9d9d9;"></div><div class="r" style="left:928px;top:1061px;width:323px;height:216px;background:#f9f9f9;border:2px solid #d9d9d9;"></div><div class="r" style="left:928px;top:1115px;width:323px;height:2px;background:#d9d9d9;"></div><div class="r" style="left:928px;top:1168px;width:323px;height:2px;background:#d9d9d9;"></div><div class="r" style="left:928px;top:1221px;width:323px;height:2px;background:#d9d9d9;"></div><div class="r" style="left:928px;top:1436px;width:323px;height:125px;background:#f9f9f9;border:2px solid #d9d9d9;"></div><div class="r" style="left:928px;top:1497px;width:323px;height:2px;background:#d9d9d9;"></div><span class="t" style="top: 509.3px; font-size: 26.8px; color: rgb(33, 191, 138); right: 1641.5px; -webkit-text-stroke-width: 0.3px; transform-origin: right center; transform: scaleX(0.934);">$500,000</span><span class="t" style="top: 562.5px; font-size: 26.8px; color: rgb(33, 191, 138); right: 1641.5px; -webkit-text-stroke-width: 0.3px; transform-origin: right center; transform: scaleX(0.9321);">$50,000</span><span class="t" style="top: 615.9px; font-size: 26.8px; color: rgb(33, 191, 138); right: 1641.5px; -webkit-text-stroke-width: 0.3px; transform-origin: right center; transform: scaleX(0.8759);">8.5%</span><span class="t" style="top: 669.3px; font-size: 26.8px; color: rgb(33, 191, 138); right: 1641.5px; -webkit-text-stroke-width: 0.3px; transform-origin: right center; transform: scaleX(0.9392);">10</span><span class="t" style="top: 722.6px; font-size: 26.8px; color: rgb(33, 191, 138); right: 1641.5px; -webkit-text-stroke-width: 0.3px; transform-origin: right center; transform: scaleX(0.9045);">Feb-18</span><span class="t" style="top: 821px; font-size: 26.8px; color: rgb(33, 191, 138); right: 1641.5px; -webkit-text-stroke-width: 0.3px; transform-origin: right center; transform: scaleX(0.9392);">$150</span><span class="t" style="top: 874.1px; font-size: 26.8px; color: rgb(33, 191, 138); right: 1641.5px; -webkit-text-stroke-width: 0.3px; transform-origin: right center; transform: scaleX(0.9333);">$1,043</span><span class="t" style="top: 1075.4px; font-size: 26.8px; color: rgb(51, 51, 51); right: 1641.5px; -webkit-text-stroke-width: 0.3px; transform-origin: right center; transform: scaleX(0.934);">$450,000</span><span class="t" style="top: 1128.7px; font-size: 26.8px; color: rgb(51, 51, 51); right: 1641.5px; -webkit-text-stroke-width: 0.3px; transform-origin: right center; transform: scaleX(0.9333);">$5,579</span><span class="t" style="top: 1182px; font-size: 26.8px; color: rgb(51, 51, 51); right: 1641.5px; -webkit-text-stroke-width: 0.3px; transform-origin: right center; transform: scaleX(0.9333);">$6,772</span><span class="t" style="top: 1235.2px; font-size: 26.8px; color: rgb(51, 51, 51); right: 1641.5px; -webkit-text-stroke-width: 0.3px; transform-origin: right center; transform: scaleX(0.9077);">10.00%</span><span class="t" style="top: 1453.7px; font-size: 26.8px; color: rgb(51, 51, 51); right: 1641.5px; -webkit-text-stroke-width: 0.3px; transform-origin: right center; transform: scaleX(0.934);">$219,523</span><svg class="r" style="left:1235px;top:1223px;" width="14" height="13" viewBox="0 0 14 13"><path d="M0 0h14v13z" fill="#2ba7c9"></path></svg><span class="t" style="top: 367.6px; font-size: 36.5px; color: rgb(17, 17, 17); font-weight: 700; left: 2104.5px; transform: translateX(-50%) scaleX(0.8211);">Total amount paid towards loan</span><svg class="r" style="left:0;top:0" width="2880" height="1618" viewBox="0 0 2880 1618"><circle cx="2104" cy="630" r="159" fill="none" stroke="#d2d2d2" stroke-width="2"></circle><path d="M2104.00 499.70A130.3 130.3 0 0 1 2233.27 646.33L2202.22 642.41A99 99 0 0 0 2104.00 531.00Z" fill="#3498db" stroke="#f2f2f2" stroke-width="1.500"></path><path d="M2233.27 646.33A130.3 130.3 0 1 1 1987.49 571.66L2015.48 585.67A99 99 0 1 0 2202.22 642.41Z" fill="#2ecc71" stroke="#f2f2f2" stroke-width="1.500"></path><path d="M1987.49 571.66A130.3 130.3 0 0 1 2085.87 500.97L2090.22 531.96A99 99 0 0 0 2015.48 585.67Z" fill="#f1c40f" stroke="#f2f2f2" stroke-width="1.500"></path><path d="M2085.87 500.97A130.3 130.3 0 0 1 2104.00 499.70L2104.00 531.00A99 99 0 0 0 2090.22 531.96Z" fill="#e67e22" stroke="#f2f2f2" stroke-width="1.500"></path></svg><div class="r" style="left:1644.2px;top:851px;width:20px;height:20px;background:#3498db;border-radius:50%;"></div><span class="t" style="top: 848.7px; font-size: 24.6px; color: rgb(34, 34, 34); left: 1680.5px; -webkit-text-stroke-width: 0.3px; transform-origin: left center; transform: scaleX(0.9652);">Total Interest Paid</span><div class="r" style="left:1967.2px;top:851px;width:20px;height:20px;background:#2ecc71;border-radius:50%;"></div><span class="t" style="top: 848.7px; font-size: 24.6px; color: rgb(34, 34, 34); left: 2003.5px; -webkit-text-stroke-width: 0.3px; transform-origin: left center; transform: scaleX(0.9467);">Total Principal Paid</span><div class="r" style="left:2291.2px;top:851px;width:20px;height:20px;background:#f1c40f;border-radius:50%;"></div><span class="t" style="top: 848.7px; font-size: 24.6px; color: rgb(34, 34, 34); left: 2327.5px; -webkit-text-stroke-width: 0.3px; transform-origin: left center; transform: scaleX(0.9546);">Total Property Tax Paid</span><div class="r" style="left:1644.2px;top:887px;width:20px;height:20px;background:#e67e22;border-radius:50%;"></div><span class="t" style="top: 884.7px; font-size: 24.6px; color: rgb(34, 34, 34); left: 1680.5px; -webkit-text-stroke-width: 0.3px; transform-origin: left center; transform: scaleX(0.9378);">Total Insurance Paid</span><div class="r" style="left:1573px;top:951px;width:1201px;height:165px;background:#21bf8a;"></div><div class="r" style="left:1573px;top:1003px;width:1201px;height:1px;background:#2fc596;"></div><div class="r" style="left:1815px;top:1062px;width:1px;height:54px;background:#4fcea4;"></div><div class="r" style="left:2007px;top:1062px;width:1px;height:54px;background:#4fcea4;"></div><div class="r" style="left:2199px;top:1062px;width:1px;height:54px;background:#4fcea4;"></div><div class="r" style="left:2391px;top:1062px;width:1px;height:54px;background:#4fcea4;"></div><div class="r" style="left:2583px;top:1062px;width:1px;height:54px;background:#4fcea4;"></div><span class="t" style="top: 964.6px; font-size: 26.8px; color: rgb(255, 255, 255); font-weight: 700; left: 2174.5px; transform: translateX(-50%) scaleX(0.8895);">Loan Tenure vs Monthly payment</span><span class="t" style="top: 1020.6px; font-size: 26.8px; color: rgb(255, 255, 255); font-weight: 700; left: 2174.5px; transform: translateX(-50%) scaleX(0.9015);">Years</span><span class="t" style="top: 1075.5px; font-size: 26.8px; color: rgb(255, 255, 255); font-weight: 700; left: 1694.5px; transform: translateX(-50%) scaleX(0.8994);">Interest Rate</span><span class="t" style="top: 1076.3px; font-size: 27.2px; color: rgb(255, 255, 255); left: 1912px; transform: translateX(-50%) scaleX(0.8926); -webkit-text-stroke-width: 0.3px;">1</span><span class="t" style="top: 1076.3px; font-size: 27.2px; color: rgb(255, 255, 255); left: 2104px; transform: translateX(-50%) scaleX(0.8926); -webkit-text-stroke-width: 0.3px;">5</span><span class="t" style="top: 1076.3px; font-size: 27.2px; color: rgb(255, 255, 255); left: 2296px; transform: translateX(-50%) scaleX(0.9421); -webkit-text-stroke-width: 0.3px;">10</span><span class="t" style="top: 1076.3px; font-size: 27.2px; color: rgb(255, 255, 255); left: 2488px; transform: translateX(-50%) scaleX(0.9421); -webkit-text-stroke-width: 0.3px;">15</span><span class="t" style="top: 1076.3px; font-size: 27.2px; color: rgb(255, 255, 255); left: 2679.5px; transform: translateX(-50%) scaleX(0.9421); -webkit-text-stroke-width: 0.3px;">20</span><div class="r" style="left:1573px;top:1115px;width:1201px;height:2.5px;background:#a6e4cd;"></div><div class="r" style="left:1573px;top:1116px;width:1201px;height:53px;background:#fff;"></div><div class="r" style="left:1573px;top:1167.7px;width:1201px;height:2.6px;background:#a6e4cd;"></div><span class="t" style="top: 1128.7px; font-size: 26.8px; color: rgb(51, 51, 51); left: 1694.5px; transform: translateX(-50%) scaleX(0.8949); -webkit-text-stroke-width: 0.3px;">8.00%</span><span class="t" style="top: 1128.7px; font-size: 26.8px; color: rgb(51, 51, 51); left: 1912px; transform: translateX(-50%) scaleX(0.9239); -webkit-text-stroke-width: 0.3px;">$39,145</span><span class="t" style="top: 1128.7px; font-size: 26.8px; color: rgb(51, 51, 51); left: 2104px; transform: translateX(-50%) scaleX(0.9333); -webkit-text-stroke-width: 0.3px;">$9,124</span><span class="t" style="top: 1128.7px; font-size: 26.8px; color: rgb(51, 51, 51); left: 2296px; transform: translateX(-50%) scaleX(0.9333); -webkit-text-stroke-width: 0.3px;">$5,460</span><span class="t" style="top: 1128.7px; font-size: 26.8px; color: rgb(51, 51, 51); left: 2488px; transform: translateX(-50%) scaleX(0.9333); -webkit-text-stroke-width: 0.3px;">$4,300</span><span class="t" style="top: 1128.7px; font-size: 26.8px; color: rgb(51, 51, 51); left: 2679.5px; transform: translateX(-50%) scaleX(0.9333); -webkit-text-stroke-width: 0.3px;">$3,764</span><div class="r" style="left:1573px;top:1169px;width:1201px;height:53px;background:#fff;"></div><div class="r" style="left:1573px;top:1169px;width:243px;height:53px;background:#e3f7f0;"></div><div class="r" style="left:1573px;top:1220.7px;width:1201px;height:2.6px;background:#a6e4cd;"></div><span class="t" style="top: 1182px; font-size: 26.8px; color: rgb(51, 51, 51); left: 1694.5px; transform: translateX(-50%) scaleX(0.8949); -webkit-text-stroke-width: 0.3px;">8.25%</span><span class="t" style="top: 1182px; font-size: 26.8px; color: rgb(51, 51, 51); left: 1912px; transform: translateX(-50%) scaleX(0.9239); -webkit-text-stroke-width: 0.3px;">$39,197</span><span class="t" style="top: 1182px; font-size: 26.8px; color: rgb(51, 51, 51); left: 2104px; transform: translateX(-50%) scaleX(0.9333); -webkit-text-stroke-width: 0.3px;">$9,178</span><span class="t" style="top: 1182px; font-size: 26.8px; color: rgb(51, 51, 51); left: 2296px; transform: translateX(-50%) scaleX(0.9333); -webkit-text-stroke-width: 0.3px;">$5,519</span><span class="t" style="top: 1182px; font-size: 26.8px; color: rgb(51, 51, 51); left: 2488px; transform: translateX(-50%) scaleX(0.9333); -webkit-text-stroke-width: 0.3px;">$4,366</span><span class="t" style="top: 1182px; font-size: 26.8px; color: rgb(51, 51, 51); left: 2679.5px; transform: translateX(-50%) scaleX(0.9333); -webkit-text-stroke-width: 0.3px;">$3,834</span><div class="r" style="left:1573px;top:1222px;width:1201px;height:54px;background:#fff;"></div><div class="r" style="left:1573px;top:1274.7px;width:1201px;height:2.6px;background:#a6e4cd;"></div><span class="t" style="top: 1235.2px; font-size: 26.8px; color: rgb(51, 51, 51); left: 1694.5px; transform: translateX(-50%) scaleX(0.8949); -webkit-text-stroke-width: 0.3px;">8.50%</span><span class="t" style="top: 1235.2px; font-size: 26.8px; color: rgb(51, 51, 51); left: 1912px; transform: translateX(-50%) scaleX(0.9239); -webkit-text-stroke-width: 0.3px;">$39,249</span><span class="t" style="top: 1235.2px; font-size: 26.8px; color: rgb(51, 51, 51); left: 2104px; transform: translateX(-50%) scaleX(0.9333); -webkit-text-stroke-width: 0.3px;">$9,232</span><span class="t" style="top: 1235.2px; font-size: 26.8px; color: rgb(51, 51, 51); left: 2296px; transform: translateX(-50%) scaleX(0.9333); -webkit-text-stroke-width: 0.3px;">$5,579</span><span class="t" style="top: 1235.2px; font-size: 26.8px; color: rgb(51, 51, 51); left: 2488px; transform: translateX(-50%) scaleX(0.9333); -webkit-text-stroke-width: 0.3px;">$4,431</span><span class="t" style="top: 1235.2px; font-size: 26.8px; color: rgb(51, 51, 51); left: 2679.5px; transform: translateX(-50%) scaleX(0.9333); -webkit-text-stroke-width: 0.3px;">$3,905</span><div class="r" style="left:1573px;top:1276px;width:1201px;height:56px;background:#fff;"></div><div class="r" style="left:1573px;top:1276px;width:243px;height:56px;background:#e3f7f0;"></div><div class="r" style="left:1573px;top:1330.7px;width:1201px;height:2.6px;background:#a6e4cd;"></div><span class="t" style="top: 1290.3px; font-size: 26.8px; color: rgb(51, 51, 51); left: 1694.5px; transform: translateX(-50%) scaleX(0.8949); -webkit-text-stroke-width: 0.3px;">8.75%</span><span class="t" style="top: 1290.3px; font-size: 26.8px; color: rgb(51, 51, 51); left: 1912px; transform: translateX(-50%) scaleX(0.9239); -webkit-text-stroke-width: 0.3px;">$39,301</span><span class="t" style="top: 1290.3px; font-size: 26.8px; color: rgb(51, 51, 51); left: 2104px; transform: translateX(-50%) scaleX(0.9333); -webkit-text-stroke-width: 0.3px;">$9,287</span><span class="t" style="top: 1290.3px; font-size: 26.8px; color: rgb(51, 51, 51); left: 2296px; transform: translateX(-50%) scaleX(0.9333); -webkit-text-stroke-width: 0.3px;">$5,640</span><span class="t" style="top: 1290.3px; font-size: 26.8px; color: rgb(51, 51, 51); left: 2488px; transform: translateX(-50%) scaleX(0.9333); -webkit-text-stroke-width: 0.3px;">$4,498</span><span class="t" style="top: 1290.3px; font-size: 26.8px; color: rgb(51, 51, 51); left: 2679.5px; transform: translateX(-50%) scaleX(0.9333); -webkit-text-stroke-width: 0.3px;">$3,977</span><div class="r" style="left:1573px;top:1332px;width:1201px;height:73px;background:#fff;"></div><div class="r" style="left:1573px;top:1403.7px;width:1201px;height:2.6px;background:#a6e4cd;"></div><span class="t" style="top: 1355px; font-size: 26.8px; color: rgb(51, 51, 51); left: 1694.5px; transform: translateX(-50%) scaleX(0.8949); -webkit-text-stroke-width: 0.3px;">9.00%</span><span class="t" style="top: 1355px; font-size: 26.8px; color: rgb(51, 51, 51); left: 1912px; transform: translateX(-50%) scaleX(0.9239); -webkit-text-stroke-width: 0.3px;">$39,353</span><span class="t" style="top: 1355px; font-size: 26.8px; color: rgb(51, 51, 51); left: 2104px; transform: translateX(-50%) scaleX(0.9333); -webkit-text-stroke-width: 0.3px;">$9,341</span><span class="t" style="top: 1355px; font-size: 26.8px; color: rgb(51, 51, 51); left: 2296px; transform: translateX(-50%) scaleX(0.9333); -webkit-text-stroke-width: 0.3px;">$5,700</span><span class="t" style="top: 1355px; font-size: 26.8px; color: rgb(51, 51, 51); left: 2488px; transform: translateX(-50%) scaleX(0.9333); -webkit-text-stroke-width: 0.3px;">$4,564</span><span class="t" style="top: 1355px; font-size: 26.8px; color: rgb(51, 51, 51); left: 2679.5px; transform: translateX(-50%) scaleX(0.9333); -webkit-text-stroke-width: 0.3px;">$4,049</span><div class="r" style="left:2774.5px;top:252.5px;width:29.5px;height:1261.5px;background:#f7f7f7;border-left:1.500px solid #d8d8d8;border-right:1.500px solid #dcdcdc;border-bottom:2px solid #dedede;border-top:1.500px solid #d2d2d2;"></div><div class="r" style="left:2804px;top:252.5px;width:76px;height:1289.5px;background:#f9f9f9;border-top:1.500px solid #dcdcdc;"></div><svg class="r" style="left:2823px;top:280px;" width="40" height="30" viewBox="0 0 40 30">
<path d="M2 5.200H11.800Q13.800 5.200 12.700 7L2.900 22.300Q1.500 26 5 26H12.500Q16 26 18.200 23L30.300 9.800Q31.800 8.300 32.500 10.300L36.300 22.400Q37 25.600 33.700 24.900L19.800 19.600" fill="none" stroke="#3a3a3a" stroke-width="2.300" stroke-linecap="round" stroke-linejoin="round"></path>
<path d="M24.800 8.200L16.200 18.200" fill="none" stroke="#3a3a3a" stroke-width="2.300" stroke-linecap="round"></path>
<circle cx="23.200" cy="2.800" r="1.900" fill="#3a3a3a"></circle>
</svg><span class="t" style="top:355.7px;font-size:38.5px;color:#3a3a3a;left:2827.0px;-webkit-text-stroke-width:0.3px;">f</span><span class="t" style="top: 363.8px; font-size: 29.5px; color: rgb(58, 58, 58); left: 2839.8px; -webkit-text-stroke-width: 0.3px; transform-origin: left center; transform: scaleX(1.0169);">x</span><svg class="r" style="left:2826px;top:438px;" width="34" height="34" viewBox="0 0 34 34">
<path d="M3 2.200h26.500a2 2 0 0 1 2 2v19a2 2 0 0 1-2 2H8.500l-7 5.800V4.200a2 2 0 0 1 1.500-2z" fill="none" stroke="#3a3a3a" stroke-width="2.100" stroke-linejoin="round"></path>
<path d="M7 10h16.300M7 15.800h8.500" stroke="#3a3a3a" stroke-width="2.100" stroke-linecap="round"></path>
</svg><svg class="r" style="left:2826px;top:1327px;" width="36" height="36" viewBox="0 0 36 36">
<path d="M23.600 14.500V5a2.400 2.400 0 0 0-2.400-2.400H5.400A2.400 2.400 0 0 0 3 5v19.600A2.400 2.400 0 0 0 5.400 27h6" fill="none" stroke="#3a3a3a" stroke-width="2.100" stroke-linecap="round"></path>
<path d="M7.200 8.200h12M7.200 13h6" stroke="#3a3a3a" stroke-width="2.100" stroke-linecap="round"></path>
<path d="M13 21.800c2.400-3.800 5.400-5.200 7.800-5.200s5.400 1.400 7.800 5.200c-2.400 3.800-5.400 5.200-7.800 5.200s-5.400-1.400-7.800-5.200z" fill="#f9f9f9" stroke="#3a3a3a" stroke-width="2" stroke-linejoin="round"></path>
<circle cx="20.800" cy="21.600" r="2.200" fill="none" stroke="#3a3a3a" stroke-width="1.800"></circle>
</svg><svg class="r" style="left:2822px;top:1403px;" width="40" height="40" viewBox="0 0 40 40">
<circle cx="20" cy="20" r="9.500" fill="none" stroke="#3a3a3a" stroke-width="2.200"></circle>
<path d="M20 10.500a9.500 9.500 0 0 1 0 19z" fill="#3a3a3a"></path>
<path d="M34.5 20.0L39.0 20.0M30.3 30.3L33.4 33.4M20.0 34.5L20.0 39.0M9.7 30.3L6.6 33.4M5.5 20.0L1.0 20.0M9.7 9.7L6.6 6.6M20.0 5.5L20.0 1.0M30.3 9.7L33.4 6.6" stroke="#3a3a3a" stroke-width="2.200" stroke-linecap="round"></path>
</svg><svg class="r" style="left:2826px;top:1486px;" width="34" height="34" viewBox="0 0 34 34">
<path d="M2.400 10.600h3.300v6.900H2.400z" fill="none" stroke="#3a3a3a" stroke-width="2" stroke-linejoin="round"></path>
<path d="M5.700 11.300L9.500 3.800Q10.500 2.600 11.600 3.600Q12.400 4.600 11.400 10.600H16Q17.400 10.600 17.100 12L16.200 17Q16 17.800 15 17.800H5.700" fill="none" stroke="#3a3a3a" stroke-width="2" stroke-linejoin="round" stroke-linecap="round"></path>
<path d="M20.700 9.800H28Q29.400 9.800 29.400 11.200V24Q29.400 25.500 28 25.500H23.600L23.300 31.300L17 25.500H4.800Q2.400 25.500 2.400 22.200" fill="none" stroke="#3a3a3a" stroke-width="2" stroke-linejoin="round" stroke-linecap="round"></path>
</svg><div class="r" style="left:0px;top:1512px;width:2804px;height:30px;background:#f8f8f8;border-top:2px solid #dcdcdc;border-bottom:2px solid #dcdcdc;border-left:4px solid #e4e4e4;"></div><div class="r" style="left:2775px;top:1512px;width:2px;height:28px;background:#e0e0e0;"></div><div class="r" style="left:0px;top:1542px;width:2880px;height:76px;background:#f0f0f0;"></div><div class="r" style="left:0px;top:1542px;width:63px;height:76px;background:#e6e6e6;"></div><div class="r" style="left:63px;top:1542px;width:2px;height:76px;background:#dadada;"></div><svg class="r" style="left:15px;top:1563px;" width="34" height="32" viewBox="0 0 34 32">
<path d="M16.500 1.500c8.500 0 15.500 4.500 15.500 11s-7 11-15.500 11c-2 0-4-0.300-5.800-0.800L3.500 29l2-8.500C2.500 18.500 1.500 15.500 1.500 12.500c0-6.500 6.500-11 15-11z" fill="none" stroke="#3a3a3a" stroke-width="2.200" stroke-linejoin="round"></path>
<circle cx="10" cy="12.500" r="2" fill="#2a8fb5"></circle><circle cx="16.700" cy="12.500" r="2" fill="#2a8fb5"></circle><circle cx="23.400" cy="12.500" r="2" fill="#2a8fb5"></circle>
</svg><svg class="r" style="left:89px;top:1571px;" width="26" height="14" viewBox="0 0 26 14"><path d="M13 1L25 13H1z" fill="#3a3a3a" stroke="#3a3a3a" stroke-width="1.500" stroke-linejoin="round"></path></svg><svg class="r" style="left:148px;top:1560px;" width="36" height="36" viewBox="0 0 36 36"><circle cx="18" cy="18" r="18" fill="#1aab68"></circle><path d="M18 9v18M9 18h18" stroke="#fff" stroke-width="4" stroke-linecap="round"></path></svg><svg class="r" style="left:0px;top:0px;filter:drop-shadow(0 1.500px 3px rgba(0,0,0,0.2));" width="2880" height="1618" viewBox="0 0 2880 1618"><path d="M205 1542Q216 1542 216 1553V1589Q216 1599.500 226.500 1599.500H505.500Q516 1599.500 516 1589V1553Q516 1542 527 1542Z" fill="#fff"></path></svg><div class="r" style="left:200px;top:1536px;width:334px;height:4px;background:#f8f8f8;"></div><div class="r" style="left:200px;top:1540px;width:334px;height:2px;background:#dcdcdc;"></div><span class="t" style="top: 1558.8px; font-size: 24.8px; color: rgb(34, 34, 34); font-weight: 700; left: 241.5px; transform-origin: left center; transform: scaleX(0.9176);">Mortgage Calculator</span><svg class="r" style="left:474.5px;top:1567.5px;" width="17.5" height="9" viewBox="0 0 17.5 9"><path d="M0.5 0.5h16.5l-8.25 8z" fill="#808080" stroke="#808080" stroke-width="1" stroke-linejoin="round"></path></svg><span class="t" style="top: 1558.8px; font-size: 24.8px; color: rgb(68, 68, 68); left: 547.5px; -webkit-text-stroke-width: 0.3px; transform-origin: left center; transform: scaleX(0.9826);">Amortization Table</span><div class="r" style="left:779px;top:1543px;width:2px;height:54px;background:#dcdcdc;"></div><span class="t" style="top: 1558.8px; font-size: 24.8px; color: rgb(68, 68, 68); left: 810.8px; -webkit-text-stroke-width: 0.3px; transform-origin: left center; transform: scaleX(1.0134);">Instructions</span><div class="r" style="left:970px;top:1543px;width:2px;height:54px;background:#dcdcdc;"></div><div class="r" style="left:1714px;top:1543px;width:2px;height:69px;background:#dcdcdc;"></div><div class="r" style="left:1726.5px;top:1565px;width:3px;height:30px;background:#dcdcdc;border-radius:2px;"></div><div class="r" style="left:2190px;top:1543px;width:2px;height:69px;background:#dcdcdc;"></div><div class="r" style="left:2273.5px;top:1543px;width:2px;height:69px;background:#dcdcdc;"></div><div class="r" style="left:2358.5px;top:1543px;width:2px;height:69px;background:#dcdcdc;"></div><div class="r" style="left:2460px;top:1543px;width:2px;height:69px;background:#dcdcdc;"></div><div class="r" style="left:2544px;top:1543px;width:2px;height:69px;background:#dcdcdc;"></div><div class="r" style="left:2802px;top:1543px;width:2px;height:69px;background:#dcdcdc;"></div><svg class="r" style="left:2214px;top:1558px;" width="40" height="40" viewBox="0 0 40 40">
<path d="M19.500 12.200a7.200 7.200 0 1 0 2.800 7.500" fill="none" stroke="#444" stroke-width="1.900" stroke-linecap="round"></path>
<path d="M9.800 24.800C4.500 26 2 28.500 2 31.200c0 3.400 5 5.300 11.500 5.300S25 34.600 25 31.200c0-2.700-2.500-5.200-7.800-6.400" fill="none" stroke="#444" stroke-width="1.900" stroke-linecap="round"></path>
<path d="M27 3.200c4.800 0 8.600 2.500 8.600 5.800s-3.800 5.800-8.600 5.800c-0.800 0-1.600-0.100-2.400-0.200l-4.200 3 1-4.400c-1.900-1.100-3-2.600-3-4.200 0-3.300 3.800-5.800 8.600-5.800z" fill="none" stroke="#444" stroke-width="1.700" stroke-linejoin="round"></path>
<circle cx="23.300" cy="9" r="1.050" fill="#444"></circle><circle cx="27" cy="9" r="1.050" fill="#444"></circle><circle cx="30.700" cy="9" r="1.050" fill="#444"></circle>
</svg><svg class="r" style="left:2301px;top:1566px;" width="32" height="24" viewBox="0 0 32 24"><rect x="1" y="1" width="29.800" height="22" rx="2.800" fill="none" stroke="#444" stroke-width="1.900"></rect><rect x="5.0" y="5.500" width="2" height="2" fill="#444"></rect><rect x="5.0" y="11" width="2" height="2" fill="#444"></rect><rect x="11.7" y="5.500" width="2" height="2" fill="#444"></rect><rect x="11.7" y="11" width="2" height="2" fill="#444"></rect><rect x="18.5" y="5.500" width="2" height="2" fill="#444"></rect><rect x="18.5" y="11" width="2" height="2" fill="#444"></rect><rect x="24.7" y="5.500" width="2" height="2" fill="#444"></rect><rect x="24.7" y="11" width="2" height="2" fill="#444"></rect><rect x="5" y="16.500" width="2" height="2" fill="#444"></rect><rect x="24.700" y="16.500" width="2" height="2" fill="#444"></rect><rect x="11" y="16.300" width="9.500" height="2.400" rx="0.800" fill="#444"></rect></svg><svg class="r" style="left:2381px;top:1564px;" width="28" height="28" viewBox="0 0 28 28">
<rect x="1" y="1" width="26" height="26" rx="2.200" fill="none" stroke="#444" stroke-width="1.900"></rect>
<path d="M9 1v8H1M19.500 1v8H27M9 27v-8.500H1M19.500 27v-8.500H27" fill="none" stroke="#444" stroke-width="1.900"></path>
</svg><svg class="r" style="left:2425.5px;top:1575px;" width="15" height="7.5" viewBox="0 0 15 7.5"><path d="M0.5 0.5h14l-7.0 6.5z" fill="#808080" stroke="#808080" stroke-width="1" stroke-linejoin="round"></path></svg><svg class="r" style="left:2489px;top:1564px;" width="28" height="28" viewBox="0 0 28 28">
<rect x="1" y="1" width="26.400" height="26" rx="2.200" fill="none" stroke="#444" stroke-width="1.900"></rect>
<circle cx="14.200" cy="14" r="7" fill="none" stroke="#444" stroke-width="1.800"></circle>
<path d="M14.200 4.500v4M14.200 19.500v4M4.700 14h4M19.700 14h4M12 4.800h4.400M12 23.200h4.400M5 11.800v4.400M23.400 11.800v4.400" stroke="#444" stroke-width="1.600"></path>
</svg><div class="r" style="left:2572px;top:1576.4px;width:16px;height:3.2px;background:#4a4a4a;border-radius:1px;"></div><div class="r" style="left:2615px;top:1552px;width:118px;height:52px;background:#fff;border:2px solid #e2e2e2;border-radius:8px;"></div><div class="r" style="left:2699.5px;top:1553px;width:2px;height:50px;background:#e2e2e2;"></div><span class="t" style="top: 1566.9px; font-size: 24.6px; color: rgb(34, 34, 34); left: 2635.5px; -webkit-text-stroke-width: 0.3px; transform-origin: left center; transform: scaleX(0.9343);">95%</span><svg class="r" style="left:2710px;top:1575px;" width="14" height="8.5" viewBox="0 0 14 8.5"><path d="M1.2 1.2L7.0 7.0L12.8 1.2" fill="none" stroke="#444" stroke-width="2" stroke-linecap="round" stroke-linejoin="round"></path></svg><div class="r" style="left:2760px;top:1576.4px;width:16px;height:3.2px;background:#4a4a4a;border-radius:1px;"></div><div class="r" style="left:2766.4px;top:1570px;width:3.2px;height:16px;background:#4a4a4a;border-radius:1px;"></div><svg class="r" style="left:2828px;top:1564px;" width="28" height="28" viewBox="0 0 28 28">
<path d="M1.200 8V1.200H8M1.200 1.200L10.500 10.500M26.800 8V1.200H20M26.800 1.200L17.500 10.500M1.200 20v6.800H8M1.200 26.800L10.500 17.500M26.800 20v6.800H20M26.800 26.800L17.500 17.500" fill="none" stroke="#444" stroke-width="1.800" stroke-linecap="round" stroke-linejoin="round"></path>
</svg></div></body></html>
